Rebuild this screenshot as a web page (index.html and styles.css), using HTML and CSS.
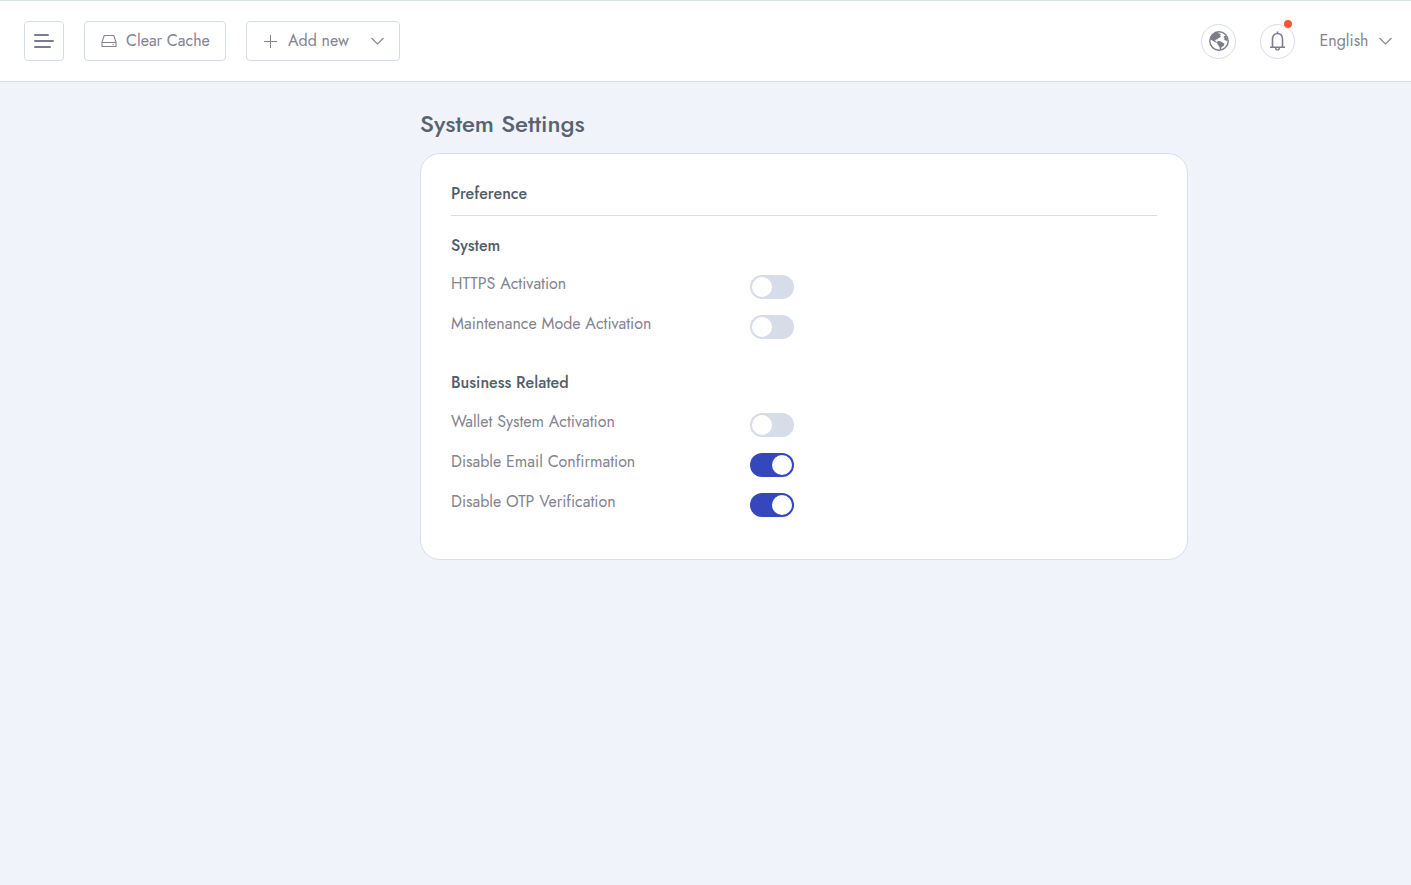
FILE: index.html
```html
<!DOCTYPE html>
<html lang="en">
<head>
<meta charset="utf-8">
<title>System Settings</title>
<link rel="stylesheet" href="styles.css">
</head>
<body>
<header class="topbar">
  <div class="group left">
    <button class="btn menu" aria-label="Menu"><svg width="20" height="14" viewBox="0 0 20 14"><path d="M1 1h13M1 7h18M1 13h15" fill="none" stroke="currentColor" stroke-width="2" stroke-linecap="round"/></svg></button>
    <button class="btn cache"><svg width="16" height="14" viewBox="0 0 16 14"><path d="M3.2 1.500h9.600L15 8v4.500H1V8zM1 8.500h14M11.600 10.500h1.200" fill="none" stroke="currentColor" stroke-width="1.100"/></svg><span>Clear Cache</span></button>
    <button class="btn add"><svg width="13" height="13" viewBox="0 0 13 13"><path d="M6.5 0v13M0 6.5h13" fill="none" stroke="currentColor" stroke-width="1"/></svg><span>Add new</span><svg class="chev" width="13" height="8" viewBox="0 0 13 8"><path d="M.5 1l6 6 6-6" fill="none" stroke="currentColor" stroke-width="1.100"/></svg></button>
  </div>
  <div class="group right">
    <span class="round"><svg width="20" height="20" viewBox="0 0 20 20"><circle cx="10" cy="10" r="9.200" fill="none" stroke="currentColor" stroke-width="1.400"/><path d="M2 6L5.200 2.300l3-1.400 2 1.600 1.500.6-.6 1.800 1 .9-2.400 1.200-1.500 1.300-2 .7.300 1.300 1.600.8-.8.600-2-1L3.300 9.500 1.300 8.500zM8.500 10.200l2.400-.2 2.200 1.300 2.300 1.200-.7 2.400-2 1-.8 2.300-1 .4-.6-3-1.600-2-.8-2zM14.600 5.400l1.800-.8 1.900 2.800.4 2.600-1.800-.2-1.900-1.600.5-1.300z" fill="currentColor"/></svg></span>
    <span class="round bell"><svg width="17" height="20" viewBox="0 0 17 20"><path d="M1 16.200h15M3.500 16V8.200c0-3.400 1.900-5.700 5-5.700s5 2.300 5 5.700V16M8.500.5v2" fill="none" stroke="currentColor" stroke-width="1.600"/><path d="M6.700 17a1.800 1.900 0 0 0 3.600 0" fill="none" stroke="currentColor" stroke-width="1.400"/></svg><i class="dot"></i></span>
    <span class="lang"><span>English</span><svg width="13" height="8" viewBox="0 0 13 8"><path d="M.5 1l6 6 6-6" fill="none" stroke="currentColor" stroke-width="1.100"/></svg></span>
  </div>
</header>
<main class="page">
  <h1 class="title">System Settings</h1>
  <section class="card">
    <h2 class="heading pref">Preference</h2>
    <h3 class="heading sys">System</h3>
    <div class="row"><span class="label">HTTPS Activation</span><span class="switch"></span></div>
    <div class="row"><span class="label">Maintenance Mode Activation</span><span class="switch"></span></div>
    <h3 class="heading biz">Business Related</h3>
    <div class="row"><span class="label">Wallet System Activation</span><span class="switch"></span></div>
    <div class="row"><span class="label">Disable Email Confirmation</span><span class="switch on"></span></div>
    <div class="row"><span class="label">Disable OTP Verification</span><span class="switch on"></span></div>
  </section>
</main>
</body>
</html>
```
FILE: styles.css
```css
* { box-sizing: border-box; }
body {
  margin: 0;
  min-height: 885px;
  background: #f0f3fa;
  color: #838391;
  font: 400 16px/24px Jost, Lato, sans-serif;
}
svg { display: block; flex: none; }
.topbar {
  display: flex;
  justify-content: space-between;
  align-items: center;
  height: 82px;
  padding: 0 19.5px 0 24px;
  background: #fff;
  border-top: 1px solid #dae6e2;
  border-bottom: 1px solid #d9deea;
}
.group { display: flex; align-items: center; }
.left { gap: 20px; }
.right { gap: 24px; }
.btn {
  display: flex;
  align-items: center;
  height: 40px;
  padding: 0;
  background: #fff;
  border: 1px solid #d5dbea;
  border-radius: 4px;
  color: inherit;
  font: inherit;
  white-space: nowrap;
}
.menu { width: 40px; padding-left: 9px; color: #7c7c90; }
.cache { width: 142px; padding-left: 16px; gap: 9px; }
.add { width: 154px; padding-left: 17px; gap: 11px; }
.chev { margin: 0 15px 0 auto; }
.round {
  position: relative;
  display: flex;
  align-items: center;
  justify-content: center;
  width: 35px;
  height: 35px;
  margin-top: 1px;
  padding-bottom: 1px;
  border: 1px solid #d9ddec;
  border-radius: 50%;
  color: #7c7c8c;
}
.dot {
  position: absolute;
  top: -5px;
  right: 2px;
  width: 8px;
  height: 8px;
  border-radius: 50%;
  background: #ff5630;
}
.lang { display: flex; align-items: center; gap: 10px; }
.page { width: 768px; margin: 0 0 0 420px; padding-top: 24px; }
.title { margin: 0 0 11px; font-size: 24px; line-height: 36px; font-weight: 500; color: #596370; }
.card {
  height: 407px;
  padding: 28px 30px 0;
  background: #fff;
  border: 1px solid #d9deea;
  border-radius: 20px;
}
.heading { margin: 0; font-size: 16px; line-height: 24px; font-weight: 500; color: #535d69; }
.pref { height: 34px; border-bottom: 1px solid #dadeea; }
.sys { margin: 18px 0 14px; }
.biz { margin: 19px 0 15px; }
.row { display: grid; grid-template-columns: 299px 44px; height: 40px; }
.label { white-space: nowrap; }
.switch {
  display: flex;
  width: 44px;
  height: 24px;
  margin-top: 3px;
  padding: 2px;
  border-radius: 12px;
  background: #d7dce9;
}
.switch::before { content: ""; width: 20px; height: 20px; border-radius: 50%; background: #fff; }
.on { justify-content: flex-end; background: #3447bd; }
```
